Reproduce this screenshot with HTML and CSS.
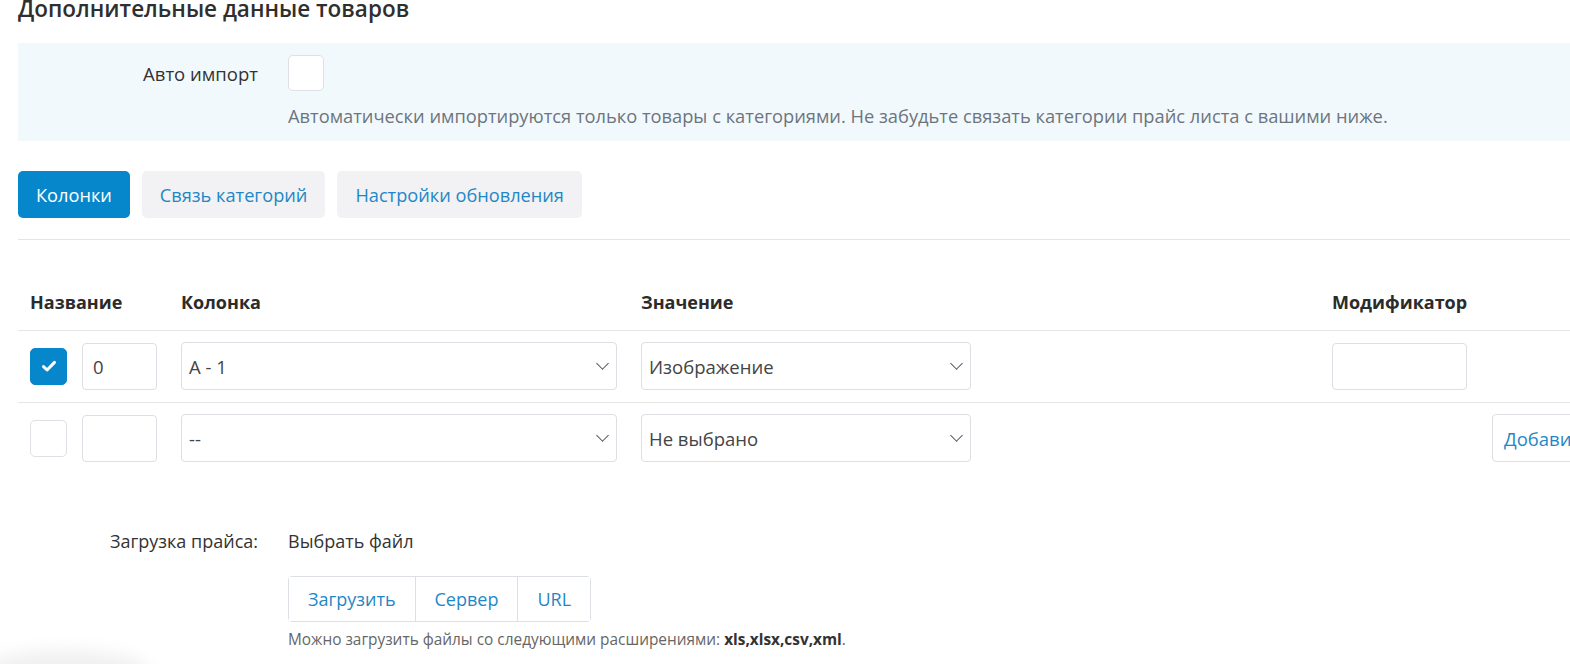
FILE: index.html
```html
<!DOCTYPE html>
<html lang="ru">
<head>
  <meta charset="UTF-8">
  <title>Дополнительные данные товаров</title>
  <link rel="stylesheet" href="styles.css">
</head>
<body>

<div class="page">
  <h3 class="page-title">Дополнительные данные товаров</h3>

  <!-- auto import -->
  <div class="info-panel">
    <div class="form-row">
      <label class="form-label">Авто импорт</label>
      <div class="form-control-wrap">
        <span class="check"></span>
      </div>
    </div>
    <div class="form-row">
      <span></span>
      <p class="help-text">Автоматически импортируются только товары с категориями. Не забудьте связать категории прайс листа с вашими ниже.</p>
    </div>
  </div>

  <!-- tabs -->
  <div class="tabs">
    <button class="tab active">Колонки</button>
    <button class="tab">Связь категорий</button>
    <button class="tab">Настройки обновления</button>
  </div>

  <table class="columns-table">
    <colgroup>
      <col class="col-name">
      <col class="col-column">
      <col class="col-value">
      <col class="col-mod">
      <col class="col-action">
    </colgroup>
    <thead>
      <tr>
        <th>Название</th>
        <th>Колонка</th>
        <th>Значение</th>
        <th>Модификатор</th>
        <th></th>
      </tr>
    </thead>
    <tbody>
      <tr>
        <td>
          <div class="name-cell">
            <span class="check checked">
              <svg viewBox="0 0 16 16" width="16" height="16"><path d="M2.5 8.6l3.6 3.4 7.4-7.6" fill="none" stroke="#fff" stroke-width="3" stroke-linecap="round" stroke-linejoin="round"/></svg>
            </span>
            <input class="field small" type="text" value="0">
          </div>
        </td>
        <td><div class="select wide">A - 1<span class="chev"></span></div></td>
        <td><div class="select">Изображение<span class="chev"></span></div></td>
        <td><input class="field mod" type="text"></td>
        <td></td>
      </tr>
      <tr>
        <td>
          <div class="name-cell">
            <span class="check"></span>
            <input class="field small" type="text">
          </div>
        </td>
        <td><div class="select wide">--<span class="chev"></span></div></td>
        <td><div class="select">Не выбрано<span class="chev"></span></div></td>
        <td></td>
        <td><button class="btn-add">Добавить</button></td>
      </tr>
    </tbody>
  </table>

  <!-- price upload -->
  <div class="upload">
    <div class="form-row">
      <label class="form-label">Загрузка прайса:</label>
      <span class="upload-title">Выбрать файл</span>
    </div>
    <div class="form-row">
      <span></span>
      <div>
        <div class="btn-group">
          <button>Загрузить</button>
          <button>Сервер</button>
          <button>URL</button>
        </div>
        <p class="hint">Можно загрузить файлы со следующими расширениями: <b>xls,xlsx,csv,xml</b>.</p>
      </div>
    </div>
  </div>
</div>

<div class="corner-shadow"></div>

</body>
</html>
```

FILE: styles.css
```css
html, body {
  margin: 0;
  overflow: hidden;
}
body {
  font-family: "Open Sans", Arial, sans-serif;
  color: #333;
  background: #fff;
}
.page {
  width: 1700px;
  padding-left: 18px;
}
.page-title {
  margin: -4px 0 0;
  font-size: 22.5px;
  line-height: 26px;
  font-weight: 600;
  color: #2f2f2f;
}
.info-panel {
  margin-top: 21px;
  background: #f2f9fd;
  padding: 12px 0 13px;
}
.form-row {
  display: grid;
  grid-template-columns: 240px 1fr;
  column-gap: 30px;
  align-items: center;
}
.form-label {
  text-align: right;
  font-size: 18.5px;
}
.check {
  width: 36px;
  height: 36px;
  box-sizing: border-box;
  border: 1px solid #dde1e5;
  border-radius: 5px;
  background: #fff;
  display: flex;
  align-items: center;
  justify-content: center;
}
.check.checked {
  background: #0787cb;
  border-color: #0787cb;
}
.help-text {
  margin: 12px 0 0;
  font-size: 18.3px;
  color: #6c757d;
}
.tabs {
  display: flex;
  gap: 12px;
  margin-top: 30px;
  padding-bottom: 21px;
  border-bottom: 1px solid #e5e5e5;
}
.tab {
  font-family: inherit;
  font-size: 18.2px;
  height: 47px;
  padding: 0 18px;
  border: none;
  border-radius: 5px;
  background: #f2f2f4;
  color: #1f87c6;
}
.tab.active {
  background: #0787cb;
  color: #fff;
}
.columns-table {
  margin-top: 40px;
  border-collapse: collapse;
  table-layout: fixed;
  width: 1682px;
}
.col-name { width: 151px; }
.col-column { width: 460px; }
.col-value { width: 691px; }
.col-mod { width: 160px; }
.columns-table th {
  text-align: left;
  font-size: 18px;
  font-weight: 700;
  color: #2b2b2b;
  padding: 10px 12px 16px 12px;
  border-bottom: 1px solid #e6e6e6;
}
.columns-table td {
  padding: 11px 12px 12px;
  border-bottom: 1px solid #e6e6e6;
  vertical-align: middle;
}
.columns-table tr:last-child td {
  border-bottom: none;
}
.name-cell {
  display: flex;
  align-items: center;
  gap: 15px;
}
.name-cell .check {
  width: 37px;
  height: 37px;
}
.field {
  box-sizing: border-box;
  height: 47px;
  border: 1px solid #dcdfe3;
  border-radius: 4px;
  font-family: inherit;
  font-size: 18.5px;
  color: #444;
  padding: 0 10px;
  background: #fff;
}
.field.small { width: 75px; }
.field.mod { width: 135px; }
.select {
  box-sizing: border-box;
  width: 330px;
  height: 48px;
  border: 1px solid #dcdfe3;
  border-radius: 4px;
  padding: 0 7px;
  display: flex;
  align-items: center;
  font-size: 18.5px;
  color: #444;
  position: relative;
}
.select.wide { width: 436px; }
.chev {
  position: absolute;
  right: 9px;
  top: 50%;
  width: 8px;
  height: 8px;
  margin-top: -7px;
  border-right: 1.5px solid #555;
  border-bottom: 1.5px solid #555;
  transform: rotate(45deg);
}
.btn-add {
  font-family: inherit;
  font-size: 18.5px;
  height: 48px;
  padding: 0 11px;
  border: 1px solid #dcdfe3;
  border-radius: 4px;
  background: #fff;
  color: #1f87c6;
  white-space: nowrap;
}
.upload {
  margin-top: 55px;
}
.upload .form-label {
  font-size: 18px;
}
.upload-title {
  font-size: 18px;
}
.btn-group {
  display: inline-flex;
  margin-top: 23px;
  border: 1px solid #dcdfe3;
  border-radius: 4px;
}
.btn-group button {
  font-family: inherit;
  font-size: 18px;
  height: 44px;
  padding: 0 19px;
  border: none;
  background: #fff;
  color: #1f87c6;
}
.btn-group button + button {
  border-left: 1px solid #dcdfe3;
}
.hint {
  margin: 7px 0 0;
  font-size: 15.4px;
  color: #666;
}
.hint b {
  color: #333;
}
.corner-shadow {
  position: fixed;
  left: -20px;
  bottom: -30px;
  width: 170px;
  height: 44px;
  border-radius: 50%;
  background: rgba(0, 0, 0, .06);
  filter: blur(8px);
}
```
